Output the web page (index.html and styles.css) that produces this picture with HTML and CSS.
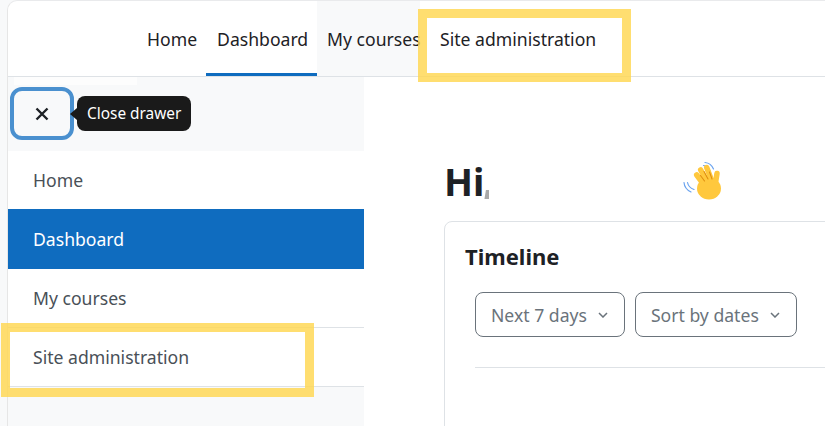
FILE: index.html
```html
<!DOCTYPE html>
<html lang="en">
<head>
<meta charset="utf-8">
<title>Dashboard</title>
<link rel="stylesheet" href="styles.css">
</head>
<body>
<div class="page">
  <header class="topbar">
    <nav class="topnav">
      <a class="tab tab-home">Home</a>
      <a class="tab tab-active">Dashboard</a>
      <a class="tab tab-hover">My courses</a>
      <a class="tab tab-admin">Site administration</a>
    </nav>
  </header>
  <div class="body-grid">
    <aside class="drawer">
      <div class="drawer-head">
        <button class="close-btn" type="button" aria-label="Close drawer">
          <svg class="close-icon" viewBox="0 0 14 14" width="14" height="14"><path d="M1.5 1.5 12.5 12.5M12.5 1.5 1.5 12.5"/></svg>
        </button>
      </div>
      <ul class="drawer-list">
        <li class="drawer-item">Home</li>
        <li class="drawer-item drawer-active">Dashboard</li>
        <li class="drawer-item drawer-rule">My courses</li>
        <li class="drawer-item drawer-rule">Site administration</li>
      </ul>
    </aside>
    <main class="content">
      <div class="greeting">
        <h1 class="hi">Hi</h1>
        <span class="smudge"></span>
        <svg class="wave" viewBox="0 0 42 40" width="42" height="40">
          <g class="wave-lines">
            <path d="M23 2.500Q29 3 31.500 9"/>
            <path d="M21.500 5.500Q26 6 28 11"/>
            <path d="M2 22.500Q2.500 29 9 32"/>
            <path d="M5.500 22.500Q6.500 27.500 12 29.500"/>
          </g>
          <g class="wave-fingers">
            <path d="M23 26 14.700 15"/>
            <path d="M27 25 18.700 10"/>
            <path d="M31 24 24.700 7.500"/>
            <path d="M33 26 35 13.500"/>
          </g>
          <ellipse class="wave-palm" cx="27" cy="28.500" rx="12" ry="11"/>
          <g class="wave-creases">
            <path d="M18.500 15.500 22.500 21"/>
            <path d="M22 11.500 26 19"/>
            <path d="M27.500 12 30 19"/>
          </g>
        </svg>
      </div>
      <section class="card">
        <h2 class="card-title">Timeline</h2>
        <div class="filters">
          <button class="filter" type="button">Next 7 days
            <svg class="chevron" viewBox="0 0 10 6" width="10" height="6"><path d="M1 1 5 5 9 1"/></svg>
          </button>
          <button class="filter" type="button">Sort by dates
            <svg class="chevron" viewBox="0 0 10 6" width="10" height="6"><path d="M1 1 5 5 9 1"/></svg>
          </button>
        </div>
        <div class="card-rule"></div>
      </section>
    </main>
  </div>
  <div class="tooltip">Close drawer</div>
  <div class="mark mark-top"></div>
  <div class="mark mark-side"></div>
</div>
</body>
</html>
```
FILE: styles.css
```css
* { box-sizing: border-box; }
html, body { margin: 0; height: 100%; overflow: hidden; background: #f8f9fa; }
body { font-family: "Noto Sans", "Open Sans", sans-serif; color: #1d2125; }

.page {
  position: relative;
  width: 818px;
  height: 426px;
  margin-left: 7px;
  background: #fff;
  border-left: 1px solid #e6e6e6;
  border-top: 1px solid #e9eaec;
  border-top-left-radius: 10px;
}

.topbar {
  height: 76px;
  border-bottom: 1px solid #dee2e6;
  padding-left: 128px;
}
.topnav { display: flex; height: 75px; }
.tab {
  display: block;
  padding: 24px 10px 0;
  font-size: 17.6px;
  line-height: 28px;
  color: #1d2125;
  white-space: nowrap;
}
.tab-home { padding-left: 11px; padding-right: 9px; }
.tab-active { padding-left: 11px; padding-right: 9px; border-bottom: 3px solid #0f6cbf; width: 111px; }
.tab-hover { background: #f8f9fa; padding-right: 0; width: 103px; }
.tab-admin { padding-left: 20px; }

.body-grid { display: grid; grid-template-columns: 356px 462px; height: 349px; }

.drawer { background: #f8f9fa; }
.drawer-head { height: 74px; padding: 10px 0 0 2px; position: relative; }
.drawer-head::before {
  content: "";
  position: absolute;
  left: 6px;
  top: 0;
  width: 123px;
  height: 8px;
  background: #fdfdfd;
}
.close-btn {
  display: flex;
  align-items: center;
  justify-content: center;
  width: 64px;
  height: 53px;
  padding: 0;
  background: #f8f9fa;
  border: 4px solid #4a90cf;
  border-radius: 12px;
}
.close-icon { fill: none; stroke: #1d2125; stroke-width: 2.400; }

.drawer-list { list-style: none; margin: 0; padding: 0; }
.drawer-item {
  height: 58px;
  padding: 15px 25px 0;
  font-size: 17.6px;
  line-height: 28px;
  color: #495057;
  background: #fff;
}
.drawer-active { height: 60px; padding-top: 16px; background: #0f6cbf; color: #fff; }
.drawer-rule + .drawer-rule { height: 60px; border-top: 1px solid #dee2e6; border-bottom: 1px solid #dee2e6; }

.content { padding: 0 0 0 80px; overflow: hidden; }
.greeting { display: flex; align-items: flex-start; height: 144px; padding-top: 78px; }
.hi { margin: 0; font-size: 38px; line-height: 52px; font-weight: 700; color: #1d2125; }
.smudge {
  width: 5px;
  height: 9px;
  margin-top: 35px;
  background: #a9a9a9;
  clip-path: polygon(30% 0, 100% 0, 100% 100%, 0 100%);
}
.wave { margin: 5px 0 0 193px; flex: none; }
.wave-lines path { fill: none; stroke: #6aa3ef; stroke-width: 1.200; stroke-linecap: round; }
.wave-fingers path { fill: none; stroke: #ffc83d; stroke-width: 5.500; stroke-linecap: round; }
.wave-palm { fill: #ffc83d; }
.wave-creases path { fill: none; stroke: #e08f10; stroke-width: 1.100; stroke-linecap: round; }

.card {
  width: 520px;
  height: 240px;
  background: #fff;
  border: 1px solid #dee2e6;
  border-radius: 8px;
  padding: 19px 0 0 20px;
}
.card-title { margin: 0; font-size: 22px; line-height: 30px; font-weight: 700; color: #1d2125; }
.filters { display: flex; gap: 10px; margin: 21px 0 0 10px; }
.filter {
  display: flex;
  align-items: center;
  height: 45px;
  padding: 0 16px 0 15px;
  gap: 11px;
  background: #fff;
  border: 1px solid #6a737b;
  border-radius: 8px;
  font: inherit;
  font-size: 17.6px;
  color: #6a737b;
  white-space: nowrap;
}
.chevron { fill: none; stroke: #6a737b; stroke-width: 1.500; }
.card-rule { height: 1px; margin: 30px 0 0 10px; background: #dee2e6; }

.tooltip {
  position: absolute;
  left: 69px;
  top: 95px;
  height: 35px;
  padding: 0 10px;
  background: #1a1a1a;
  border-radius: 8px;
  color: #fff;
  font-size: 15.4px;
  line-height: 36px;
  white-space: nowrap;
}
.tooltip::before {
  content: "";
  position: absolute;
  left: -7px;
  top: 12px;
  border-style: solid;
  border-width: 6px 7px 6px 0;
  border-color: transparent #1a1a1a transparent transparent;
}

.mark { position: absolute; border: 9px solid rgba(255, 215, 80, 0.82); }
.mark-top { left: 410px; top: 8px; width: 213px; height: 73px; }
.mark-side { left: -7px; top: 322px; width: 313px; height: 74px; }
```
